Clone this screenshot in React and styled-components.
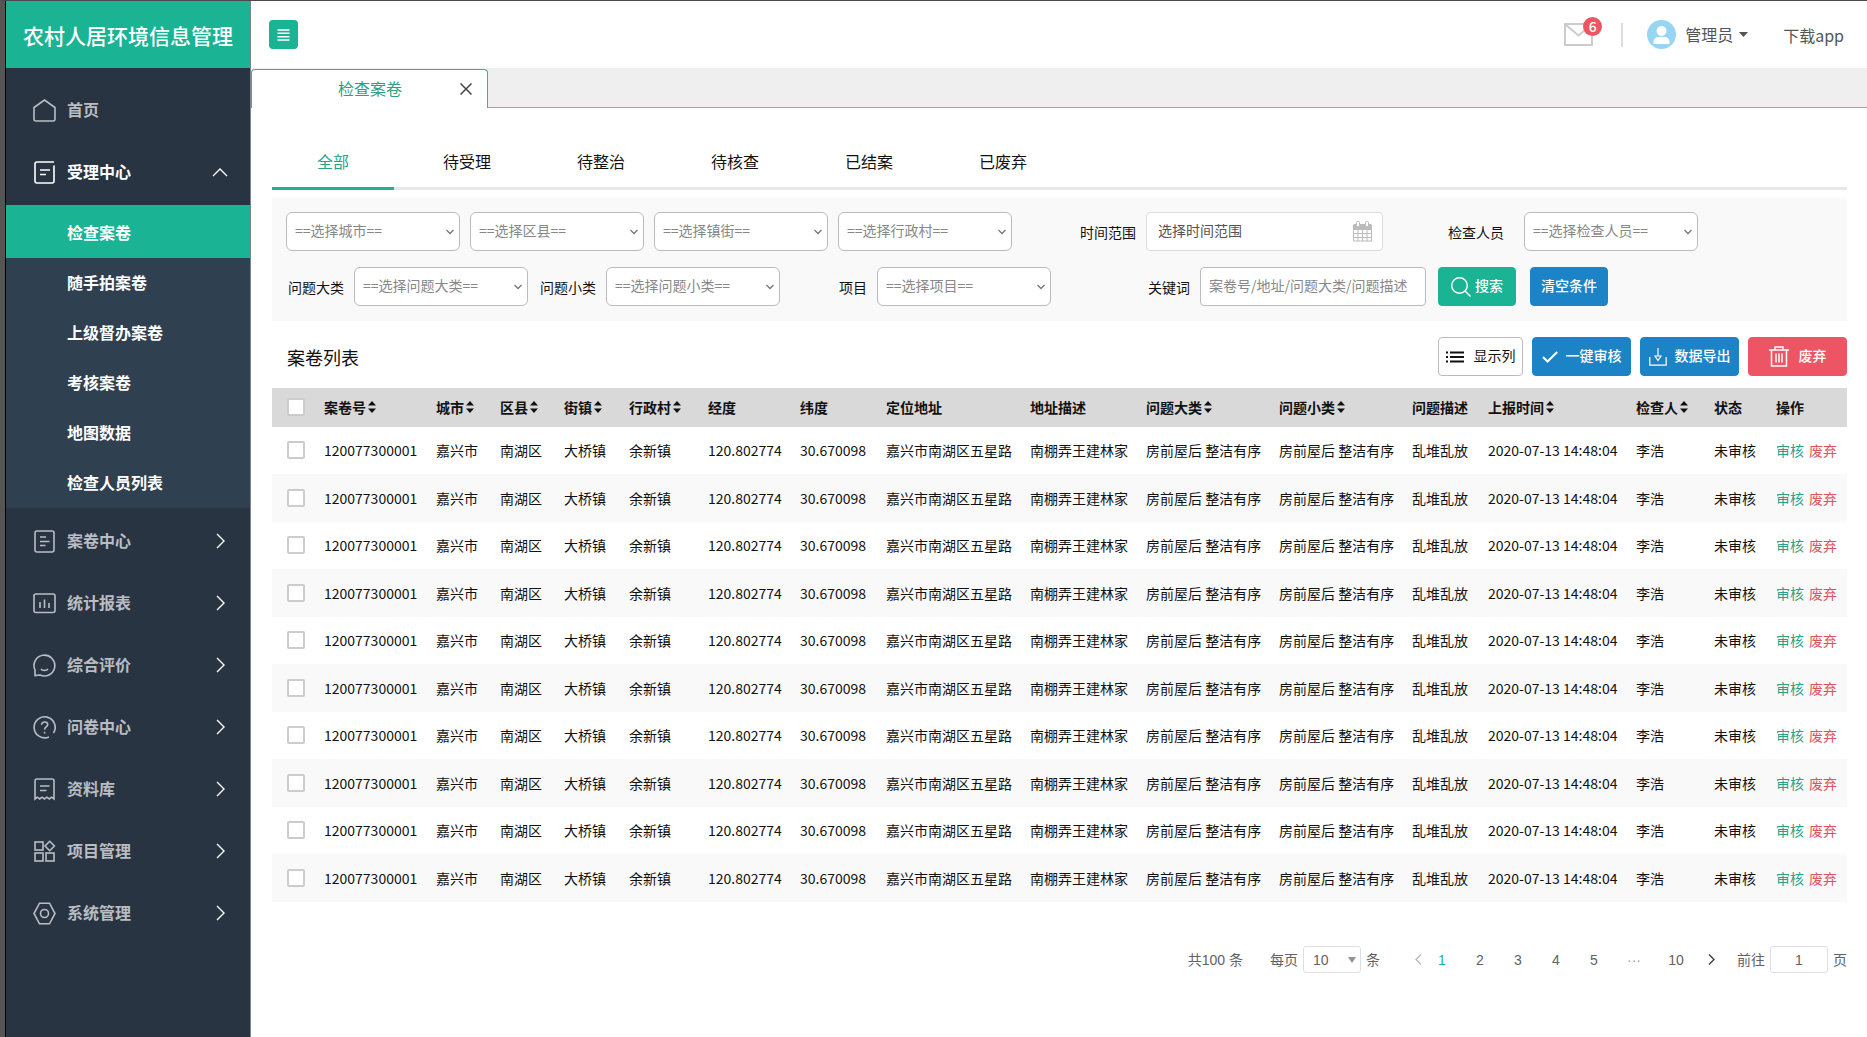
import React, { useState } from 'react';
import styled, { createGlobalStyle } from 'styled-components';

const menuTop = [
  { name: '首页', icon: 'home' },
  { name: '受理中心', icon: 'accept', open: true },
];

const subMenu = ['检查案卷', '随手拍案卷', '上级督办案卷', '考核案卷', '地图数据', '检查人员列表'];

const menuBottom = [
  { name: '案卷中心', icon: 'file' },
  { name: '统计报表', icon: 'chart' },
  { name: '综合评价', icon: 'smile' },
  { name: '问卷中心', icon: 'question' },
  { name: '资料库', icon: 'receipt' },
  { name: '项目管理', icon: 'blocks' },
  { name: '系统管理', icon: 'setting' },
];

const statusTabs = ['全部', '待受理', '待整治', '待核查', '已结案', '已废弃'];

const columns = [
  { key: 'no', title: '案卷号', width: 112, sort: true },
  { key: 'city', title: '城市', width: 64, sort: true },
  { key: 'district', title: '区县', width: 64, sort: true },
  { key: 'town', title: '街镇', width: 65, sort: true },
  { key: 'village', title: '行政村', width: 79, sort: true },
  { key: 'lng', title: '经度', width: 92 },
  { key: 'lat', title: '纬度', width: 86 },
  { key: 'location', title: '定位地址', width: 144 },
  { key: 'address', title: '地址描述', width: 116 },
  { key: 'type', title: '问题大类', width: 133, sort: true },
  { key: 'subType', title: '问题小类', width: 133, sort: true },
  { key: 'desc', title: '问题描述', width: 76 },
  { key: 'time', title: '上报时间', width: 148, sort: true },
  { key: 'checker', title: '检查人', width: 78, sort: true },
  { key: 'status', title: '状态', width: 62 },
];

const rows = Array.from({ length: 10 }, (_, i) => ({
  id: i,
  no: '120077300001',
  city: '嘉兴市',
  district: '南湖区',
  town: '大桥镇',
  village: '余新镇',
  lng: '120.802774',
  lat: '30.670098',
  location: '嘉兴市南湖区五星路',
  address: '南棚弄王建林家',
  type: '房前屋后 整洁有序',
  subType: '房前屋后 整洁有序',
  desc: '乱堆乱放',
  time: '2020-07-13 14:48:04',
  checker: '李浩',
  status: '未审核',
}));

const icons = {
  home: <path d="M1 8.500 11.500 1l10.500 7.500V20a2 2 0 0 1-2 2H3a2 2 0 0 1-2-2z" />,
  accept: (
    <>
      <path d="M21 1H4a2 2 0 0 0-2 2v17a2 2 0 0 0 2 2h15a2 2 0 0 0 2-2V4.500" />
      <path d="M7 9h10M7 13.500h6" />
    </>
  ),
  file: (
    <>
      <rect x="2" y="1" width="19" height="21" rx="2" />
      <path d="M7 7h6M7 11.500h9.500M7 15.500h5.500" />
    </>
  ),
  chart: (
    <>
      <rect x="1" y="2" width="21" height="18.500" rx="2" />
      <path d="M7 10v6M11.500 7.500v8.500M16 11v5" />
    </>
  ),
  smile: (
    <>
      <path d="M2 21.500V16A10.400 10.400 0 1 1 7 21z" />
      <path d="M8 15c1.500 2 5.500 2 7 0" />
    </>
  ),
  question: (
    <>
      <path d="M16 20.900A10.500 10.500 0 1 1 20.500 17" />
      <path d="M8.500 8.800c.3-3.800 6.200-3.600 6.200-.2 0 2.300-3.100 2.300-3.100 5M11.600 15.800v1.600" />
    </>
  ),
  receipt: (
    <>
      <path d="M2 21V3a2 2 0 0 1 2-2h15a2 2 0 0 1 2 2v18l-2.400-1.800L16.300 21l-2.400-1.800L11.500 21l-2.400-1.800L6.700 21l-2.400-1.800z" />
      <path d="M7 8h9.500M7 12.500h6.500" />
    </>
  ),
  blocks: (
    <>
      <rect x="2" y="2" width="8" height="8" />
      <rect x="2" y="13" width="8" height="8" />
      <rect x="13" y="13" width="8" height="8" />
      <path d="m16.700 1.300 4.700 4.700-4.700 4.700L12 6z" />
    </>
  ),
  setting: (
    <>
      <path d="M6.500 1.200h10L22 11.500l-5.500 10.300h-10L1 11.500z" />
      <circle cx="11.500" cy="11.500" r="4" />
    </>
  ),
};

function MenuIcon({ name }) {
  return (
    <svg width="23" height="23" viewBox="0 0 23 23" fill="none" stroke="currentColor" strokeWidth="1.600">
      {icons[name]}
    </svg>
  );
}

function Arrow({ up }) {
  return (
    <svg width="16" height="16" viewBox="0 0 16 16" fill="none" stroke="#fff" strokeWidth="1.400">
      <path d={up ? 'M1 12l7-7 7 7' : 'M5 1l7 7-7 7'} />
    </svg>
  );
}

function SelectBox({ id, text, label }) {
  return (
    <SelectWrap>
      <Select id={id} aria-label={label}>
        <option>{text}</option>
      </Select>
      <SelectArrow width="8" height="6" viewBox="0 0 8 6" fill="none" stroke="#777" strokeWidth="1.300">
        <path d="M.5 1 4 4.500 7.500 1" />
      </SelectArrow>
    </SelectWrap>
  );
}

function App() {
  const [active, setActive] = useState('检查案卷');
  const [tab, setTab] = useState('全部');
  const [page, setPage] = useState(1);

  const renderPage = (n) => (
    <PageButton key={n} type="button" $on={page === n} $wide={n > 9} onClick={() => setPage(n)}>
      {n}
    </PageButton>
  );

  return (
    <Layout>
      <GlobalStyle />
      <Sidebar>
        <Brand>农村人居环境信息管理</Brand>
        <Menu>
          {menuTop.map((item) => (
            <MenuItem key={item.name} href="#" $open={item.open}>
              <MenuIcon name={item.icon} />
              <span>{item.name}</span>
              {item.open && <Arrow up />}
            </MenuItem>
          ))}
          <SubMenu>
            {subMenu.map((name) => (
              <SubItem key={name} href="#" $on={active === name} onClick={() => setActive(name)}>
                {name}
              </SubItem>
            ))}
          </SubMenu>
          {menuBottom.map((item) => (
            <MenuItem key={item.name} href="#">
              <MenuIcon name={item.icon} />
              <span>{item.name}</span>
              <Arrow />
            </MenuItem>
          ))}
        </Menu>
      </Sidebar>

      <Main>
        <Header>
          <Toggle type="button" aria-label="菜单">
            <svg width="13" height="12" viewBox="0 0 13 12" stroke="#fff" strokeWidth="1.400">
              <path d="M.5 1h12M.5 4.300h12M.5 7.700h12M.5 11h12" />
            </svg>
          </Toggle>
          <Mail href="#" aria-label="消息">
            <svg width="29" height="23" viewBox="0 0 29 23" fill="none" stroke="#ccc" strokeWidth="2">
              <path d="M1 1h27v21H1zM2 2l12.500 10.500L27 2" />
            </svg>
            <Badge>6</Badge>
          </Mail>
          <Divider />
          <User type="button">
            <svg width="29" height="29" viewBox="0 0 29 29">
              <circle cx="14.500" cy="14.500" r="14.500" fill="#98d5f3" />
              <circle cx="14.500" cy="11" r="5" fill="#fff" />
              <path d="M6.500 24v-2c0-3.500 2.500-5 5-5h6c2.500 0 5 1.500 5 5v2z" fill="#fff" />
            </svg>
            <span>管理员</span>
            <svg width="9" height="5" viewBox="0 0 9 5">
              <path d="M0 0h9L4.500 5z" fill="#555" />
            </svg>
          </User>
          <Download href="#">下载app</Download>
        </Header>

        <TabBar>
          <PageTab>
            <span>检查案卷</span>
            <Close type="button" aria-label="关闭">
              <svg width="12" height="12" viewBox="0 0 12 12" stroke="#444" strokeWidth="1.500">
                <path d="M.5.5l11 11M11.500.5l-11 11" />
              </svg>
            </Close>
          </PageTab>
        </TabBar>

        <Content>
          <StatusTabs>
            {statusTabs.map((name) => (
              <StatusTab key={name} type="button" $on={tab === name} onClick={() => setTab(name)}>
                {name}
              </StatusTab>
            ))}
          </StatusTabs>

          <Filters>
            <FilterRow>
              <SelectBox text="==选择城市==" label="城市" />
              <SelectBox text="==选择区县==" label="区县" />
              <SelectBox text="==选择镇街==" label="镇街" />
              <SelectBox text="==选择行政村==" label="行政村" />
              <Field $before={58}>
                <label htmlFor="range">时间范围</label>
                <DateWrap>
                  <DateInput id="range" placeholder="选择时间范围" />
                  <Calendar width="19" height="21" viewBox="0 0 19 21" fill="none" stroke="#bbb">
                    <path d="M.5 4h18v16H.5zM.5 8.500h18M.5 12.500h18M.5 16.500h18M5 8v12M9.500 8v12M14 8v12" />
                    <path d="M1 3.500h17v4H1z" fill="#bbb" />
                    <rect x="3.500" y=".5" width="3" height="5" rx="1" fill="#fff" />
                    <rect x="12.500" y=".5" width="3" height="5" rx="1" fill="#fff" />
                  </Calendar>
                </DateWrap>
              </Field>
              <Field $before={55} $gap={20}>
                <label htmlFor="checker">检查人员</label>
                <SelectBox id="checker" text="==选择检查人员==" />
              </Field>
            </FilterRow>
            <FilterRow>
              <Field $before={2}>
                <label htmlFor="type">问题大类</label>
                <SelectBox id="type" text="==选择问题大类==" />
              </Field>
              <Field $before={2}>
                <label htmlFor="subType">问题小类</label>
                <SelectBox id="subType" text="==选择问题小类==" />
              </Field>
              <Field $before={49}>
                <label htmlFor="project">项目</label>
                <SelectBox id="project" text="==选择项目==" />
              </Field>
              <Field $before={87}>
                <label htmlFor="keyword">关键词</label>
                <TextInput id="keyword" placeholder="案卷号/地址/问题大类/问题描述" />
              </Field>
              <FilterButtons>
                <Button type="button" $width={78} $bg="#1ab394" $gap={4}>
                  <svg width="20" height="20" viewBox="0 0 20 20" fill="none" stroke="#fff" strokeWidth="1.400">
                    <circle cx="8.500" cy="8.500" r="7.800" />
                    <path d="M14 14l5.500 5.500" />
                  </svg>
                  <span>搜索</span>
                </Button>
                <Button type="button" $width={78} $bg="#1c84c6">
                  <span>清空条件</span>
                </Button>
              </FilterButtons>
            </FilterRow>
          </Filters>

          <ListHead>
            <h2>案卷列表</h2>
            <Button type="button" $width={85} $plain $gap={10}>
              <svg width="18" height="12" viewBox="0 0 18 12" stroke="#111" strokeWidth="2">
                <path d="M0 1.500h2M0 6h2M0 10.500h2M4 1.500h14M4 6h14M4 10.500h14" />
              </svg>
              <span>显示列</span>
            </Button>
            <Button type="button" $width={99} $bg="#1c84c6" $gap={8}>
              <svg width="16" height="12" viewBox="0 0 16 12" fill="none" stroke="#fff" strokeWidth="2">
                <path d="M1 6l4.500 4.500L15.200 1" />
              </svg>
              <span>一键审核</span>
            </Button>
            <Button type="button" $width={99} $bg="#1c84c6" $gap={8}>
              <svg width="18" height="18" viewBox="0 0 18 18" fill="none" stroke="#fff" strokeWidth="1.200">
                <path d="M.8 9v8.200h16.400V9M9 0v8M6 8h6l-3 4.500z" />
              </svg>
              <span>数据导出</span>
            </Button>
            <Button type="button" $width={99} $bg="#ed5565" $gap={10}>
              <svg width="20" height="21" viewBox="0 0 20 21" fill="none" stroke="#fff" strokeWidth="1.500">
                <path d="M0 4h20M6 4V1h8v3M2.500 4v16h15V4M7 7.500v9M10 7.500v9M13 7.500v9" />
              </svg>
              <span>废弃</span>
            </Button>
          </ListHead>

          <Table>
            <colgroup>
              <col width="52" />
              {columns.map((c) => <col key={c.key} width={c.width} />)}
              <col width="71" />
            </colgroup>
            <thead>
              <tr>
                <CheckCell as="th"><Checkbox type="checkbox" aria-label="全选" /></CheckCell>
                {columns.map((c) => (
                  <th key={c.key}>
                    {c.sort ? (
                      <Sort type="button">
                        {c.title}
                        <svg width="8" height="12" viewBox="0 0 8 12">
                          <path d="M0 4.500h8L4 0zM0 7.500h8L4 12z" fill="#111" />
                        </svg>
                      </Sort>
                    ) : c.title}
                  </th>
                ))}
                <th>操作</th>
              </tr>
            </thead>
            <tbody>
              {rows.map((row) => (
                <tr key={row.id}>
                  <CheckCell><Checkbox type="checkbox" aria-label={row.no} /></CheckCell>
                  {columns.map((c) => <td key={c.key}>{row[c.key]}</td>)}
                  <td>
                    <Actions>
                      <Action href="#" $color="#2ba084">审核</Action>
                      <Action href="#" $color="#e0525d">废弃</Action>
                    </Actions>
                  </td>
                </tr>
              ))}
            </tbody>
          </Table>

          <Pagination>
            <Total>共100 条</Total>
            <label htmlFor="size">每页</label>
            <SizeWrap>
              <SizeSelect id="size">
                <option>10</option>
              </SizeSelect>
              <SizeArrow width="8" height="6" viewBox="0 0 8 6">
                <path d="M0 0h8L4 6z" fill="#909399" />
              </SizeArrow>
            </SizeWrap>
            <span>条</span>
            <Pages>
              <Step type="button" aria-label="上一页">
                <svg width="7" height="11" viewBox="0 0 7 11" fill="none" stroke="#b4b8bf" strokeWidth="1.300">
                  <path d="M6 .5l-5 5 5 5" />
                </svg>
              </Step>
              {[1, 2, 3, 4, 5].map(renderPage)}
              <Ellipsis>···</Ellipsis>
              {renderPage(10)}
              <Step type="button" aria-label="下一页" $next>
                <svg width="7" height="11" viewBox="0 0 7 11" fill="none" stroke="#444" strokeWidth="1.500">
                  <path d="M1 .5l5 5-5 5" />
                </svg>
              </Step>
            </Pages>
            <label htmlFor="jump">前往</label>
            <JumpInput id="jump" defaultValue="1" />
            <span>页</span>
          </Pagination>
        </Content>
      </Main>
    </Layout>
  );
}

const GlobalStyle = createGlobalStyle`
  * {
    box-sizing: border-box;
  }
  body {
    margin: 0;
    font-family: "Noto Sans CJK SC", sans-serif;
    font-size: 14px;
    line-height: 20px;
    color: #111;
    background: #fff;
  }
  a {
    text-decoration: none;
  }
  button, input, select {
    font-family: inherit;
    font-size: inherit;
    line-height: inherit;
    color: inherit;
    margin: 0;
  }
  button {
    padding: 0;
    border: none;
    background: none;
    cursor: pointer;
  }
  svg {
    flex: none;
    display: block;
  }
`;

const Layout = styled.div`
  display: flex;
  min-height: 100vh;
  border-top: 1px solid #4b494c;
  border-left: 5px solid #555654;
`;

const Sidebar = styled.aside`
  flex: none;
  width: 246px;
  border-left: 1px solid #000;
  border-right: 1px solid #7d858c;
  background: #293442;
`;

const Brand = styled.div`
  height: 67px;
  padding-left: 17px;
  line-height: 68px;
  font-size: 21px;
  font-weight: 500;
  white-space: nowrap;
  color: #fff;
  background: #1ab394;
`;

const Menu = styled.nav`
  padding-top: 11px;
`;

const MenuItem = styled.a`
  display: flex;
  align-items: center;
  gap: 11px;
  height: 62px;
  padding: 0 22px 0 27px;
  font-size: 16px;
  font-weight: bold;
  color: ${(props) => (props.$open ? '#fff' : '#b9bdc3')};
  span {
    flex: 1;
    padding-bottom: 2px;
  }
`;

const SubMenu = styled.div`
  margin: 2px 0 2px;
  background: #2f4050;
`;

const SubItem = styled.a`
  display: block;
  height: ${(props) => (props.$on ? 53 : 50)}px;
  line-height: ${(props) => (props.$on ? 54 : 48)}px;
  padding-left: 61px;
  font-size: 16px;
  font-weight: bold;
  color: #fff;
  background: ${(props) => (props.$on ? '#1ab394' : 'transparent')};
`;

const Main = styled.main`
  flex: 1;
  min-width: 0;
`;

const Header = styled.header`
  display: flex;
  align-items: center;
  height: 67px;
  padding: 0 23px 0 18px;
  font-size: 16px;
  color: #555;
`;

const Toggle = styled.button`
  display: flex;
  align-items: center;
  justify-content: center;
  width: 29px;
  height: 29px;
  margin-right: auto;
  border-radius: 4px;
  background: #1ab394;
`;

const Mail = styled.a`
  position: relative;
`;

const Badge = styled.span`
  position: absolute;
  top: -6px;
  right: -9px;
  width: 19px;
  height: 19px;
  border-radius: 50%;
  font-size: 14px;
  font-weight: 500;
  line-height: 18px;
  text-align: center;
  color: #fff;
  background: #ed5565;
`;

const Divider = styled.span`
  width: 2px;
  height: 24px;
  margin: 0 24px 0 28px;
  background: #ddd;
`;

const User = styled.button`
  display: flex;
  align-items: center;
  margin-right: 35px;
  span {
    margin: 0 6px 0 9px;
    padding-bottom: 2px;
  }
`;

const Download = styled.a`
  color: #555;
`;

const TabBar = styled.div`
  display: flex;
  align-items: flex-end;
  height: 40px;
  border-bottom: 1px solid #6fbdac;
  background: #efefef;
`;

const PageTab = styled.div`
  display: flex;
  align-items: center;
  justify-content: flex-end;
  gap: 58px;
  width: 237px;
  height: 39px;
  margin-bottom: -1px;
  padding: 0 15px 1px 0;
  border: 1px solid #3fae95;
  border-bottom: none;
  border-radius: 4px 4px 0 0;
  font-size: 16px;
  color: #2ba084;
  background: #fff;
  span {
    padding-bottom: 1px;
  }
`;

const Close = styled.button`
  display: flex;
`;

const Content = styled.div`
  padding: 29px 20px 20px 21px;
`;

const StatusTabs = styled.div`
  display: flex;
  gap: 12px;
  margin-bottom: 8px;
  box-shadow: inset 0 -3px #e4e8ed;
`;

const StatusTab = styled.button`
  width: 122px;
  height: 53px;
  padding-bottom: 3px;
  border-bottom: 3px solid ${(props) => (props.$on ? '#1ab394' : 'transparent')};
  font-size: 16px;
  color: ${(props) => (props.$on ? '#2ba084' : '#111')};
`;

const Filters = styled.div`
  display: flex;
  flex-direction: column;
  gap: 16px;
  padding: 14px 14px 15px;
  background: #f9f9f9;
`;

const FilterRow = styled.div`
  display: flex;
  align-items: center;
  gap: 10px;
  white-space: nowrap;
`;

const Field = styled.div`
  display: flex;
  align-items: center;
  gap: ${(props) => props.$gap || 10}px;
  margin-left: ${(props) => props.$before}px;
`;

const SelectWrap = styled.div`
  position: relative;
  width: 174px;
`;

const Select = styled.select`
  appearance: none;
  display: block;
  width: 100%;
  height: 39px;
  padding: 0 20px 4px 8px;
  border: 1px solid #bbb;
  border-radius: 6px;
  color: #888;
  background: #fff;
`;

const SelectArrow = styled.svg`
  position: absolute;
  right: 6px;
  top: 17px;
  pointer-events: none;
`;

const TextInput = styled.input`
  width: 226px;
  height: 39px;
  padding: 0 8px 4px;
  border: 1px solid #bbb;
  border-radius: 4px;
  background: #fff;
  &::placeholder {
    color: #888;
  }
`;

const DateWrap = styled.div`
  position: relative;
`;

const DateInput = styled(TextInput)`
  display: block;
  width: 237px;
  padding-left: 11px;
  border-color: #ddd;
  &::placeholder {
    color: #555;
  }
`;

const Calendar = styled.svg`
  position: absolute;
  right: 11px;
  top: 9px;
`;

const FilterButtons = styled.div`
  display: flex;
  gap: 14px;
  margin-left: 2px;
`;

const Button = styled.button`
  display: flex;
  align-items: center;
  justify-content: center;
  gap: ${(props) => props.$gap || 0}px;
  width: ${(props) => props.$width}px;
  height: 39px;
  border: 1px solid ${(props) => (props.$plain ? '#bbb' : props.$bg)};
  border-radius: 4px;
  font-weight: ${(props) => (props.$plain ? 400 : 500)};
  white-space: nowrap;
  color: ${(props) => (props.$plain ? '#111' : '#fff')};
  background: ${(props) => (props.$plain ? '#fff' : props.$bg)};
  span {
    padding-bottom: 4px;
  }
`;

const ListHead = styled.div`
  display: flex;
  align-items: center;
  gap: 9px;
  padding: 16px 0 12px 15px;
  h2 {
    flex: 1;
    margin: 0;
    font-size: 18px;
    font-weight: 400;
    line-height: 24px;
  }
`;

const Table = styled.table`
  width: 100%;
  table-layout: fixed;
  border-collapse: collapse;
  white-space: nowrap;
  th, td {
    padding: 0 0 1px;
    text-align: left;
  }
  th {
    height: 39px;
    font-weight: bold;
    background: #d9d9d9;
  }
  td {
    height: 47px;
  }
  tr:nth-child(even) td {
    height: 48px;
    background: #f9f9f9;
  }
`;

const CheckCell = styled.td`
  && {
    padding-left: 15px;
  }
`;

const Checkbox = styled.input`
  appearance: none;
  display: block;
  width: 18px;
  height: 18px;
  border: 2px solid #ccc;
  border-radius: 2px;
  background: #fff;
  &:checked {
    background: #1ab394;
  }
`;

const Sort = styled.button`
  display: flex;
  align-items: center;
  gap: 2px;
  font-weight: bold;
`;

const Actions = styled.div`
  display: flex;
  gap: 5px;
`;

const Action = styled.a`
  color: ${(props) => props.$color};
`;

const Pagination = styled.div`
  display: flex;
  align-items: center;
  justify-content: flex-end;
  gap: 5px;
  margin-top: 44px;
  font-family: "Liberation Sans", "Noto Sans CJK SC", sans-serif;
  color: #606266;
`;

const Total = styled.span`
  margin-right: 22px;
`;

const SizeWrap = styled.div`
  position: relative;
`;

const SizeSelect = styled.select`
  appearance: none;
  display: block;
  width: 58px;
  height: 27px;
  padding: 0 9px;
  border: 1px solid #dcdfe6;
  border-radius: 3px;
  background: #fff;
`;

const SizeArrow = styled.svg`
  position: absolute;
  right: 5px;
  top: 11px;
  pointer-events: none;
`;

const Pages = styled.div`
  display: flex;
  align-items: center;
  margin: 0 7px 0 28px;
`;

const PageButton = styled.button`
  width: ${(props) => (props.$wide ? 42 : 38)}px;
  height: 27px;
  color: ${(props) => (props.$on ? '#1ab394' : '#606266')};
`;

const Step = styled.button`
  display: flex;
  align-items: center;
  justify-content: center;
  width: ${(props) => (props.$next ? 28 : 10)}px;
  height: 27px;
`;

const Ellipsis = styled.span`
  width: 42px;
  text-align: center;
  color: #a0a3a8;
`;

const JumpInput = styled.input`
  width: 58px;
  height: 27px;
  padding: 0;
  border: 1px solid #dcdfe6;
  border-radius: 3px;
  text-align: center;
  background: #fff;
`;

export default App;
